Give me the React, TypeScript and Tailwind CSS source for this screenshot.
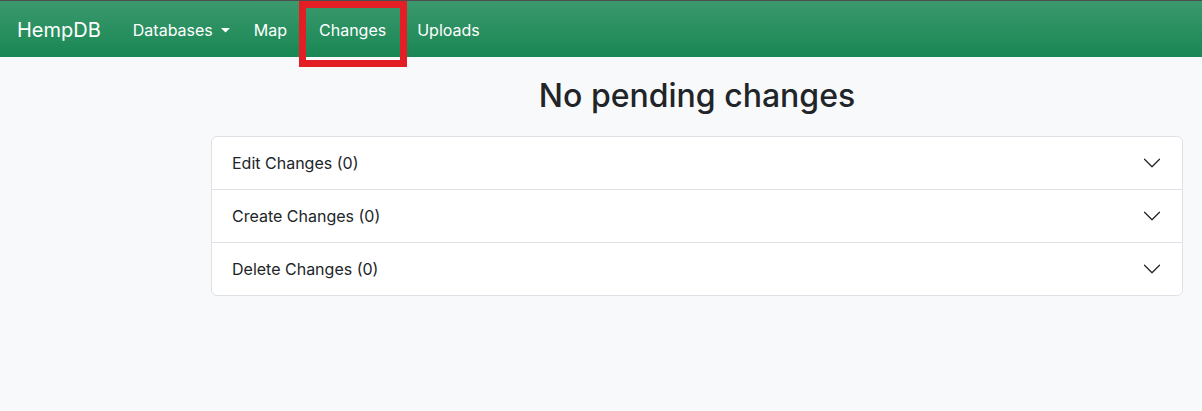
import React from "react";

const Chevron = () => (
  <svg width="20" height="20" viewBox="0 0 16 16" fill="none">
    <path d="M2 5L8 11L14 5" stroke="#212529" strokeWidth="1" strokeLinecap="round" strokeLinejoin="round" />
  </svg>
);

const Caret = () => (
  <svg width="9" height="5" viewBox="0 0 9 5" className="ml-[8px] mt-[1px]">
    <path d="M0 0H9L4.5 4.5Z" fill="white" />
  </svg>
);

export default function App() {
  const rows = ["Edit Changes (0)", "Create Changes (0)", "Delete Changes (0)"];
  return (
    <div
      className="relative min-h-[411px] bg-[#f8f9fa] text-[#212529]"
      style={{ fontFamily: "Inter, 'Noto Sans', sans-serif" }}
    >
      <div className="h-px bg-[#4d4d4d]" />
      <nav className="flex h-[56px] items-center bg-[linear-gradient(180deg,#3b996d,#198754)] pl-[17px] pt-[2px]">
        <span className="text-[20px] leading-none text-white">HempDB</span>
        <div className="ml-[24px] flex items-center text-[16px] text-white">
          <span className="flex items-center px-[8px] py-[8px]">
            Databases
            <Caret />
          </span>
          <span className="ml-[8px] px-[8px] py-[8px]">Map</span>
          <span className="ml-[16px] px-[8px] py-[8px]">Changes</span>
          <span className="ml-[15px] px-[8px] py-[8px]">Uploads</span>
        </div>
      </nav>

      <div className="ml-[211px] w-[972px]">
        <h2 className="mt-[20px] text-center text-[32px] font-medium leading-[38px]">No pending changes</h2>
        <div className="mt-[21px] overflow-hidden rounded-[6px] border border-[#dee2e6] bg-white">
          {rows.map((r, i) => (
            <div
              key={r}
              className={`box-content flex h-[52px] items-center justify-between pl-[20px] pr-[20px] text-[16px] ${
                i > 0 ? "border-t border-[#dee2e6]" : ""
              }`}
            >
              <span>{r}</span>
              <Chevron />
            </div>
          ))}
        </div>
      </div>

      <div className="absolute left-[299px] top-px h-[66px] w-[108px] border-[7px] border-[#e31e24]" />
    </div>
  );
}
